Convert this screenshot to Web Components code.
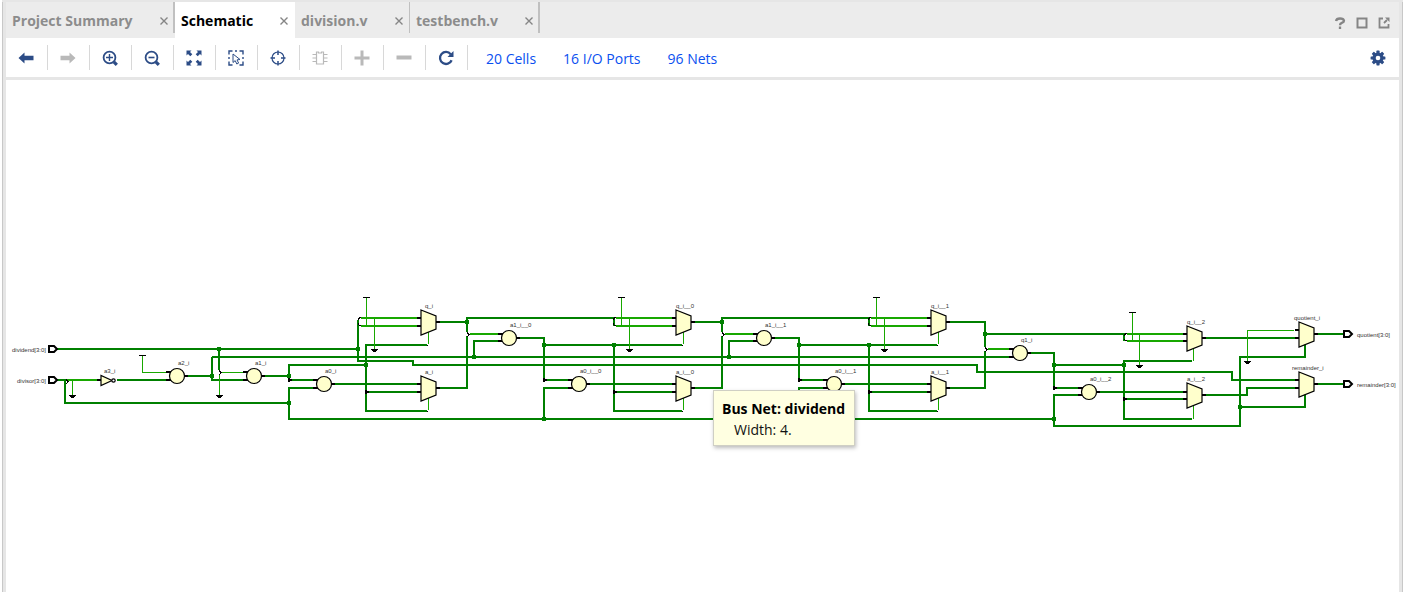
<!DOCTYPE html>
<html lang="en">
<head>
<meta charset="utf-8">
<title>Schematic</title>
<style>
html, body { margin: 0; height: 100%; }
body { background: #fff; font-family: "Open Sans", "Noto Sans", sans-serif; font-size: 14px; overflow: hidden; }
</style>
</head>
<body>
<ide-panel>
  <tab-strip slot="tabs">
    <editor-tab style="--w:169px" edge="wide">Project Summary</editor-tab>
    <editor-tab style="--w:120px" selected>Schematic</editor-tab>
    <editor-tab style="--w:115px" edge="thin">division.v</editor-tab>
    <editor-tab style="--w:130px" edge="wide">testbench.v</editor-tab>
    <window-controls slot="end"></window-controls>
  </tab-strip>
  <tool-bar slot="tools">
    <tool-button icon="back" label="Previous"></tool-button>
    <tool-button icon="forward" label="Next" disabled></tool-button>
    <tool-button icon="zoomin" label="Zoom In"></tool-button>
    <tool-button icon="zoomout" label="Zoom Out"></tool-button>
    <tool-button icon="fit" label="Zoom Fit"></tool-button>
    <tool-button icon="select" label="Select Area"></tool-button>
    <tool-button icon="target" label="Autofit Selection"></tool-button>
    <tool-button icon="cell" label="Expand Cell" disabled></tool-button>
    <tool-button icon="plus" label="Add" disabled></tool-button>
    <tool-button icon="minus" label="Remove" disabled></tool-button>
    <tool-button icon="reload" label="Regenerate"></tool-button>
    <stat-link slot="stats">20 Cells</stat-link>
    <stat-link slot="stats">16 I/O Ports</stat-link>
    <stat-link slot="stats">96 Nets</stat-link>
    <tool-button slot="end" icon="gear" label="Settings" plain></tool-button>
  </tool-bar>
  <schematic-view>
    <net-tooltip slot="tip"><span slot="title">Bus Net: dividend</span>Width: 4.</net-tooltip>
  </schematic-view>
</ide-panel>

<script>
const define = (name, html, setup) => customElements.define(name, class extends HTMLElement {
  connectedCallback() {
    if (this.shadowRoot) return;
    const root = this.attachShadow({ mode: 'open' });
    root.innerHTML = typeof html === 'function' ? html(this) : html;
    if (setup) setup(this, root);
  }
});

define('ide-panel', `
<style>
:host { display: flex; flex-direction: column; box-sizing: border-box; height: 100vh; margin: 0 4px 0 2px;
  border: solid #e6e6e6; border-width: 2px 0 0; }
.frame { flex: 1; min-height: 0; display: flex; flex-direction: column; border: solid #c8c8c8; border-width: 0 1px; }
.inner { flex: 1; min-height: 0; display: flex; flex-direction: column; border: solid #e6e6e6; border-width: 0 3px; }
</style>
<div class="frame"><div class="inner"><slot name="tabs"></slot><slot name="tools"></slot><slot></slot></div></div>`);

define('tab-strip', `
<style>
:host { display: flex; height: 36px; background: #ececec; }
nav { display: flex; flex: 1; }
</style>
<nav><slot></slot></nav><slot name="end"></slot>`);

define('editor-tab', `
<style>
:host { display: flex; position: relative; box-sizing: border-box; width: var(--w); height: 36px; align-items: center;
  justify-content: space-between; padding: 2px 6px 0; color: #8c8c8c; }
:host([selected]) { background: #fff; color: #000; }
:host([edge])::after { content: ""; position: absolute; right: 0; top: 0; width: 2px; height: 31px; background: #c0c0c0; }
:host([edge="thin"])::after { width: 1px; }
button { border: 0; background: none; padding: 0; font: inherit; color: inherit; }
.name { font-weight: 700; line-height: 20px; white-space: nowrap; }
.close { width: 10px; height: 10px; display: flex; }
svg { width: 10px; height: 10px; }
</style>
<button class="name"><slot></slot></button>
<button class="close" aria-label="Close"><svg viewBox="0 0 10 10"><path d="M1.5 1.5l7 7M8.5 1.5l-7 7" stroke="#858585" stroke-width="1.4"/></svg></button>`);

define('window-controls', `
<style>
:host { display: flex; align-items: center; gap: 10px; padding: 5px 9px 0 0; }
button { border: 0; background: none; padding: 0; width: 12px; height: 14px; display: flex; align-items: center; justify-content: center; }
svg { width: 12px; height: 12px; fill: none; stroke: #858585; stroke-width: 2; flex: none; }
</style>
<button aria-label="Help"><svg viewBox="0 0 12 12"><path d="M2 4Q2.500 1.500 6 1.500T10 3.800Q10 5.200 7.800 5.900Q6 6.500 6 8.200M6 9.600V12" stroke-width="2.300"/></svg></button>
<button aria-label="Maximize"><svg viewBox="0 0 12 12"><path d="M1.500 1.500H10.500V10.500H1.500Z"/></svg></button>
<button aria-label="Float"><svg viewBox="0 0 12 12"><path d="M5 1.500H1.500V10.500H10.500V7M6 6L9 3" stroke-width="1.800"/><path d="M7 .5H11.500V5Z" fill="#858585" stroke="none"/></svg></button>`);

define('tool-bar', `
<style>
:host { display: flex; height: 39px; align-items: center; background: #fff; border-bottom: 3px solid #e6e6e6; }
.tools { display: flex; }
.stats { display: flex; flex: 1; gap: 27px; padding: 2px 0 0 18px; }
</style>
<div class="tools"><slot></slot></div><div class="stats"><slot name="stats"></slot></div><slot name="end"></slot>`);

define('stat-link', `
<style>
:host { display: block; }
a { color: #0a50f0; text-decoration: none; font-size: 14px; line-height: 20px; white-space: nowrap; }
</style><a href="#"><slot></slot></a>`);

const B = '#2c4c86', G = '#b9b9b9';
const lens = `<circle cx="7.500" cy="7.500" r="5.900" fill="none" stroke="${B}" stroke-width="1.800"/><path d="M11.800 11.800L14.800 14.800" stroke="${B}" stroke-width="3.200"/>`;
const teeth = Array.from({ length: 8 }, (_, i) => `<rect x="6.400" y=".6" width="3.200" height="4" rx=".6" transform="rotate(${i * 45} 8 8)"/>`).join('');
const icons = {
  back: `<path d="M.5 8L6.500 2.600V5.700H15.500V10.300H6.500V13.400Z" fill="${B}"/>`,
  forward: `<path d="M15.500 8L9.500 2.600V5.700H.5V10.300H9.500V13.400Z" fill="${G}"/>`,
  zoomin: lens + `<path d="M4 7.500H11M7.500 4V11" stroke="${B}" stroke-width="1.400"/>`,
  zoomout: lens + `<path d="M4.500 7.500H10.500" stroke="${B}" stroke-width="1.600"/>`,
  fit: [0, 90, 180, 270].map(a => `<path transform="rotate(${a} 8 8)" d="M.5 .5H5.500L4 2L6.300 4.300L4.300 6.300L2 4L.5 5.500Z" fill="${B}"/>`).join(''),
  select: `<path d="M1 4.500V1H4.500M7 1H9M11.500 1H15V4.500M15 7V9M15 11.500V15H11.500M4.500 15H1V11.500M1 9V7" fill="none" stroke="${B}" stroke-width="1.400"/><path d="M5 4V12.500L7.200 10.600L8.800 14L10.600 13.100L9 9.900L12 9.500Z" fill="#fff" stroke="${B}"/>`,
  target: `<circle cx="8" cy="8" r="6" fill="none" stroke="${B}" stroke-width="1.200"/><path d="M8 .5V5M8 11V15.500M.5 8H5M11 8H15.500" stroke="${B}" stroke-width="1.500"/>`,
  cell: `<path d="M4.500 2H6.500V3H9.500V2H11.500V14H4.500Z" fill="#fff" stroke="${G}" stroke-width="1.200"/><path d="M.5 4.500H4M.5 8H4M.5 11.500H4M12 4.500H15.500M12 8H15.500M12 11.500H15.500" stroke="${G}" stroke-width="1.200"/>`,
  plus: `<path d="M.5 8H15.500M8 .5V15.500" stroke="${G}" stroke-width="3"/>`,
  minus: `<path d="M.5 7.500H15.500" stroke="${G}" stroke-width="4"/>`,
  reload: `<path d="M13.600 10.200A6 6 0 1 1 12.700 4.200" fill="none" stroke="${B}" stroke-width="2.300"/><path d="M15.500 1V7H9.500Z" fill="${B}"/>`,
  gear: `<g fill="${B}">${teeth}<circle cx="8" cy="8" r="5.600"/></g><circle cx="8" cy="8" r="2.300" fill="#fff"/>`
};
define('tool-button', el => `
<style>
:host { display: block; box-sizing: border-box; width: 42px; height: 25px; border-right: 1px solid #d8d8d8; }
:host([plain]) { border: 0; }
button { display: flex; box-sizing: border-box; align-items: center; justify-content: center; width: 100%; height: 25px; border: 0; padding: 0 1px 0 0; background: none; }
:host([plain]) button { padding: 0; }
svg { width: 16px; height: 16px; }
</style>
<button aria-label="${el.getAttribute('label')}"${el.hasAttribute('disabled') ? ' disabled' : ''}><svg viewBox="0 0 16 16">${icons[el.getAttribute('icon')]}</svg></button>`);

define('net-tooltip', `
<style>
:host { display: block; box-sizing: border-box; padding: 7px 8px; background: #ffffe1; border: 1px solid #cfcfc4; box-shadow: 1px 2px 4px #0004;
  font-size: 14px; line-height: 21px; color: #111; white-space: nowrap; }
.t { font-weight: 700; color: #000; }
.b { padding-left: 12px; }
</style>
<div class="t"><slot name="title"></slot></div><div class="b"><slot></slot></div>`);

/* Schematic drawing helpers: bus = 2px net, bit = 1px net, tap = 2px lighter net */
function drawing() {
  let bus = '', tap = '', bit = '', pin = '', bars = '', shapes = '', text = '', dots = '', joints = '';
  const label = (x, y, s) => text += `<text x="${x}" y="${y}">${s}</text>`;
  const tip = (x, y) => dots += `M${x - 1} ${y - 2}l4 1v2l-4 1z`;
  const ground = (x, y) => dots += `M${x - 3} ${y - 1}h7v1h-1v1h-1v1h-3v-1h-1v-1h-1z`;
  const power = (x, y, to) => { bars += `M${x - 3} ${y + .5}h7`; bit += `M${x + .5} ${y + 1}V${to}`; };
  const joint = (x, y) => joints += `M${x - 2} ${y - 2}h4v4h-4z`;
  const rip = (x, y) => dots += `M${x - 1} ${y - 2}h1v1h1v1h1v1h-1v1h-1v1h-1v-1h1v-1h0v-1h-1z`;
  const mux = (x, y, a, b) => {
    shapes += `<path d="M${x} ${y - 12}L${x + 15} ${y - 6}V${y + 7}L${x} ${y + 13}Z"/>`;
    pin += `M${x - 4} ${a}H${x}M${x - 4} ${b}H${x}M${x + 15} ${y}h4`;
  };
  const op = (x, y, a, b) => {
    shapes += `<circle cx="${x}" cy="${y}" r="7.500"/>`;
    pin += `M${x - 11} ${a}h5M${x - 11} ${b}h5M${x + 7} ${y}h4`;
  };
  const port = (x, y) => shapes += `<path d="M${x} ${y - 3}h5l3 3l-3 3h-5z" fill="#fff" stroke-width="2"/>`;

  // Input ports and first subtract stage
  port(49, 349); port(49, 380);
  label(12, 352, 'dividend[3:0]'); label(17, 383, 'divisor[3:0]');
  bus += 'M57 349H358M57 380H65V403H289M117 380H168M186 376H212M212 357V380H246M212 357H1010M219 349V370';
  tap += 'M67 380H98'; pin += 'M97 380h4';
  bit += 'M72.500 381V395M219.500 374V395M221 372.500H244M142.500 356V372.500H168';
  bars += 'M139 355.500h7'; rip(67, 381); rip(220, 372);
  ground(72, 396); ground(219, 396);
  shapes += '<path d="M101 375.500V385.500L112 380.500Z"/><circle cx="113.500" cy="380.500" r="1.700" fill="#fff"/>';
  label(104, 373, 'a3_i'); label(178, 365, 'a2_i'); label(255, 365, 'a1_i');
  op(177, 376, 372, 380); op(254, 376, 372, 380);
  joint(219, 349); joint(358, 349); joint(212, 376); joint(289, 376); joint(289, 403);
  bus += 'M262 376H289M289 381V365H366M289 380H315M315 388H289V419H1054M358 320V361H413V365H977V372H1232V380H1295';

  // Three repeated conditional-subtract stages
  ['', '__0', '__1'].forEach((n, i) => {
    const d = i * 255, X = v => v + d;
    // x of the mux select trunk: the first stage routes it further right
    const s = i ? X(359) : 366;
    mux(X(421), 322, 318, 326); mux(X(421), 388, 384, 392);
    label(X(425) - (i ? 4 : 0), 308, 'q_i' + n); label(X(425) - (i ? 4 : 0), 374, 'a_i' + n);
    op(X(324), 384, 380, 388); label(X(325), 373, 'a0_i' + n);
    tip(X(289), 380);
    bus += `M${X(335)} 384H${X(418)}M${s} 392H${X(418)}M${s} 345V411H${X(427)}M${s - 1} 345H${X(427)}M${X(440)} 322H${X(467)}`;
    tip(s, 392);
    if (i) {
      op(X(254), 338, 334, 341); label(X(255), 327, 'a1_i' + n);
      bus += `M${X(212)} 332V318H${X(359)}V326M${X(212)} 336V388H${X(184)}M${X(245)} 341H${X(219)}V357M${X(265)} 338H${X(289)}V380H${X(315)}M${X(289)} 345H${X(366)}M${X(315)} 388H${X(289)}V419`;
      tap += `M${X(215)} 334H${X(245)}`; rip(X(213), 334);
      joint(X(212), 322); joint(X(219), 357); joint(X(289), 345); joint(X(289), 419); joint(s, 345);
    }
    tap += `M${X(361)} 318H${X(418)}M${X(361)} 326H${X(418)}`;
    dots += `M${X(358)} 320v-2h1v-1h2v1h-1v1h-1v1zM${X(358)} 323h1v2h2v1h-2v-1h-1z`;
    power(X(366), 297, 326); bit += `M${X(374) + .5} 319V349`; ground(X(374), 350);
    bit += `M${X(428) + .5} 344V332M${X(428) + .5} 410V398`;
    bars += `M${X(427)} 345.500h1M${X(427)} 411.500h1`;
  });
  joint(289, 419 - 16); joint(544, 419); joint(366, 365);

  // Final stage
  bus += 'M950 322H985V347M985 334H1124V341M985 351V388H950M1031 353H1054V388H1080M1054 365H1124M1080 395H1054V426H1241M1100 392H1183M1192 361H1124V419H1192M1124 399H1183M1206 338H1295M1206 395H1247V388H1295M1305 344V357H1240V426M1240 407H1305V394M1317 334H1344M1317 384H1344';
  tap += 'M988 349H1010M1127 334H1183M1127 341H1183'; rip(986, 349);
  dots += 'M1124 336v-2h1v-1h2v1h-1v1h-1v1zM1124 339h1v1h2v1h-2v-1h-1z';
  joint(985, 334); joint(1054, 365); joint(1124, 365); joint(1054, 419); joint(1240, 407);
  op(1020, 353, 349, 357); label(1021, 342, 'q1_i');
  op(1089, 392, 388, 395); label(1090, 381, 'a0_i__2'); tip(1054, 388); tip(1124, 399);
  mux(1187, 338, 334, 341); label(1187, 324, 'q_i__2');
  mux(1187, 395, 392, 399); label(1187, 381, 'a_i__2');
  power(1132, 312, 341); bit += 'M1139.500 335V365M1193.500 361V348M1193.500 419V405M1247.500 361V330.500H1294';
  ground(1139, 366); ground(1247, 362);
  mux(1299, 334, 330, 338); label(1294, 320, 'quotient_i');
  mux(1299, 384, 380, 388); label(1292, 370, 'remainder_i');
  port(1344, 334); port(1344, 384);
  label(1357, 337, 'quotient[3:0]'); label(1357, 387, 'remainder[3:0]');

  return `<g fill="none" shape-rendering="crispEdges"><path d="${tap}" stroke="#18a800" stroke-width="2"/><path d="${bus}" stroke="#008000" stroke-width="2"/>
    <path d="${bit}" stroke="#18a800"/></g>
    <path d="${joints}" fill="#008000" shape-rendering="crispEdges"/>
    <path d="${pin}" stroke="#000" stroke-width="2" shape-rendering="crispEdges"/>
    <path d="${bars}" stroke="#000" shape-rendering="crispEdges"/>
    <path d="${dots}" fill="#000" shape-rendering="crispEdges"/>
    <g fill="#ffffcc" stroke="#000" stroke-width="1.200">${shapes}</g><g>${text}</g>`;
}
define('schematic-view', () => `
<style>
:host { display: block; position: relative; flex: 1; min-height: 0; background: #fff; overflow: hidden; }
svg { display: block; width: 100%; height: 100%; }
text { font: 6px "Liberation Sans", Arial, sans-serif; fill: #333; }
::slotted([slot="tip"]) { position: absolute; left: 707px; top: 310px; width: 142px; height: 56px; }
</style>
<svg viewBox="6 80 1393 512" role="img" aria-label="Divider schematic">${drawing()}</svg>
<slot name="tip"></slot>`);
</script>
</body>
</html>
